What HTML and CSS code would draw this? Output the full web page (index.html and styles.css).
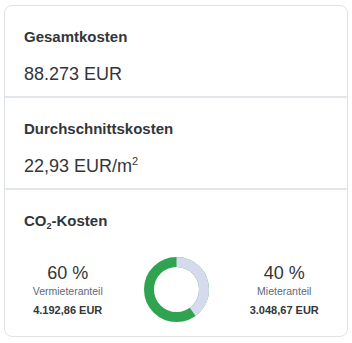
FILE: index.html
```html
<!DOCTYPE html>
<html lang="de">
<head>
    <meta charset="UTF-8">
    <meta name="viewport" content="width=device-width, initial-scale=1.0">
    <title>Kosten</title>
    <link rel="stylesheet" href="styles.css">
</head>
<body>
    <div class="cost-card">
        <div class="cost-section">
            <div class="cost-title">Gesamtkosten</div>
            <div class="cost-value">88.273 EUR</div>
        </div>
        <div class="cost-section">
            <div class="cost-title">Durchschnittskosten</div>
            <div class="cost-value">22,93 EUR/m<sup>2</sup></div>
        </div>
        <div class="cost-section co2">
            <div class="cost-title">CO<sub>2</sub>-Kosten</div>
            <div class="split">
                <div class="split-side">
                    <div class="split-percent">60 %</div>
                    <div class="split-label">Vermieteranteil</div>
                    <div class="split-amount">4.192,86 EUR</div>
                </div>
                <svg class="donut" width="65" height="65" viewBox="0 0 65 65">
                    <circle cx="32.5" cy="32.5" r="27.5" fill="none" stroke="#2fa34f" stroke-width="10"/>
                    <circle cx="32.5" cy="32.5" r="27.5" fill="none" stroke="#d5dbec" stroke-width="10"
                            stroke-dasharray="69.1 200" transform="rotate(-90 32.5 32.5)"/>
                </svg>
                <div class="split-side">
                    <div class="split-percent">40 %</div>
                    <div class="split-label">Mieteranteil</div>
                    <div class="split-amount">3.048,67 EUR</div>
                </div>
            </div>
        </div>
    </div>
</body>
</html>
```

FILE: styles.css
```css
body {
    margin: 0;
    padding: 5px 4px;
    background-color: #ffffff;
    font-family: 'Liberation Sans', Arial, sans-serif;
    color: #32363a;
}

.cost-card {
    border: 1px solid #dfe2e8;
    border-radius: 8px;
    background-color: #ffffff;
}

.cost-section {
    padding: 22px 19px 11px;
    border-top: 2px solid #e3e6ec;
}

.cost-section:first-child {
    border-top: none;
}

.cost-title {
    font-size: 15px;
    line-height: 18px;
    font-weight: 700;
}

.cost-title sub {
    font-size: 9px;
    line-height: 0;
    vertical-align: -3px;
}

.cost-value {
    margin-top: 17px;
    font-size: 18px;
    line-height: 22px;
}

.cost-value sup {
    font-size: 11px;
    line-height: 0;
    vertical-align: 7px;
}

.co2 {
    padding-bottom: 14px;
}

.split {
    display: grid;
    grid-template-columns: 1fr 65px 1fr;
    gap: 32px;
    align-items: center;
    margin-top: 27px;
}

.split-side {
    text-align: center;
}

.split-percent {
    font-size: 18px;
    line-height: 20px;
}

.split-label {
    margin-top: 1px;
    font-size: 10.5px;
    line-height: 14px;
    color: #5b6b7d;
}

.split-amount {
    margin-top: 6px;
    font-size: 11px;
    line-height: 13px;
    font-weight: 700;
}

.donut {
    display: block;
}
```
